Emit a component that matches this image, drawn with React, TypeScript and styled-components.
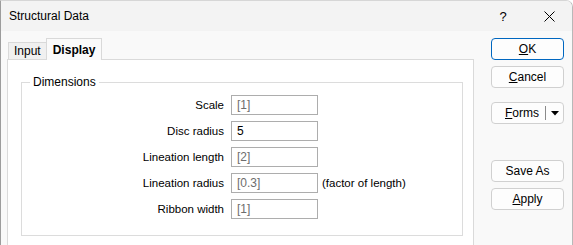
import styled, { createGlobalStyle } from "styled-components";

const GlobalStyle = createGlobalStyle`
  html, body {
    margin: 0;
    padding: 0;
    background: #ffffff;
  }
  body {
    font-family: "Segoe UI", "Liberation Sans", Arial, sans-serif;
    font-size: 12px;
    color: #000;
  }
`;

const Window = styled.div`
  width: 573px;
  height: 245px;
  box-sizing: border-box;
  border-left: 1px solid #9c9c9c;
  border-right: 1px solid #b8b8b8;
  border-top: 1px solid #d6d6d6;
  border-top-right-radius: 7px;
  background: #f9f9f9;
  display: flex;
  flex-direction: column;
  overflow: hidden;
`;

const TitleBar = styled.div`
  height: 30px;
  background: #f3f3f3;
  display: flex;
  align-items: center;
  padding-left: 8px;
  flex-shrink: 0;
`;

const Title = styled.span`
  flex: 1;
  font-size: 12px;
`;

const TitleButton = styled.div`
  width: 46px;
  height: 30px;
  display: flex;
  align-items: center;
  justify-content: center;
  font-size: 13px;
`;

const Body = styled.div`
  flex: 1;
  display: flex;
  padding: 7px 7px 0 6px;
  gap: 17px;
`;

const TabArea = styled.div`
  width: 467px;
  display: flex;
  flex-direction: column;
`;

const TabStrip = styled.div`
  height: 21px;
  display: flex;
  align-items: flex-end;
  padding-left: 1px;
`;

const Tab = styled.div<{ $active?: boolean }>`
  box-sizing: border-box;
  height: ${(p) => (p.$active ? "22px" : "17px")};
  padding: 0 ${(p) => (p.$active ? "6px" : "5px")};
  border: 1px solid #d9d9d9;
  border-bottom: none;
  background: ${(p) => (p.$active ? "#fafafa" : "#f0f0f0")};
  font-weight: ${(p) => (p.$active ? "bold" : "normal")};
  display: flex;
  align-items: center;
  margin-bottom: ${(p) => (p.$active ? "-1px" : "0")};
  margin-left: ${(p) => (p.$active ? "-1px" : "0")};
  position: relative;
  color: #000;
`;

const Panel = styled.div`
  flex: 1;
  background: #ffffff;
  border: 1px solid #dadada;
  border-bottom: none;
  padding: 15px 10px 0 13px;
`;

const GroupBox = styled.fieldset`
  margin: 0;
  border: 1px solid #dcdcdc;
  padding: 6px 0 16px 0;
  display: flex;
  flex-direction: column;
  gap: 6px;
`;

const Legend = styled.legend`
  padding: 0 3px;
  margin-left: 8px;
  font-size: 12px;
`;

const Row = styled.div`
  display: flex;
  align-items: center;
  height: 20px;
  font-size: 11.5px;
`;

const Label = styled.label`
  width: 202px;
  text-align: right;
  padding-right: 7px;
`;

const Field = styled.div<{ $muted?: boolean }>`
  box-sizing: border-box;
  width: 87px;
  height: 20px;
  border: 1px solid #adadad;
  padding-left: 5px;
  display: flex;
  align-items: center;
  font-size: 12px;
  color: ${(p) => (p.$muted ? "#6d6d6d" : "#000")};
  background: #fff;
`;

const Note = styled.span`
  margin-left: 4px;
`;

const ButtonColumn = styled.div`
  width: 73px;
  display: flex;
  flex-direction: column;
`;

const Button = styled.div<{ $primary?: boolean; $gap?: number }>`
  box-sizing: border-box;
  height: 22px;
  margin-top: ${(p) => p.$gap ?? 0}px;
  border: 1px solid ${(p) => (p.$primary ? "#0067c0" : "#d0d0d0")};
  border-radius: 4px;
  background: #fdfdfd;
  display: flex;
  align-items: center;
  justify-content: center;
`;

const SplitButton = styled(Button)`
  justify-content: flex-end;
  padding-right: 4px;
`;

const Divider = styled.span`
  width: 1px;
  height: 14px;
  background: #8a8a8a;
  margin: 0 5px 0 6px;
`;

const U = styled.span`
  text-decoration: underline;
`;

const rows = [
  { label: "Scale", value: "[1]", muted: true },
  { label: "Disc radius", value: "5", muted: false },
  { label: "Lineation length", value: "[2]", muted: true },
  { label: "Lineation radius", value: "[0.3]", muted: true, note: "(factor of length)" },
  { label: "Ribbon width", value: "[1]", muted: true },
];

const App = () => {
  return (
    <>
      <GlobalStyle />
      <Window>
        <TitleBar>
          <Title>Structural Data</Title>
          <TitleButton>?</TitleButton>
          <TitleButton>
            <svg width="11" height="11" viewBox="0 0 11 11">
              <path d="M0.5 0.5 L10.5 10.5 M10.5 0.5 L0.5 10.5" stroke="#000" strokeWidth="1" fill="none" />
            </svg>
          </TitleButton>
        </TitleBar>
        <Body>
          <TabArea>
            <TabStrip>
              <Tab>Input</Tab>
              <Tab $active>Display</Tab>
            </TabStrip>
            <Panel>
              <GroupBox>
                <Legend>Dimensions</Legend>
                {rows.map((r) => (
                  <Row key={r.label}>
                    <Label>{r.label}</Label>
                    <Field $muted={r.muted}>{r.value}</Field>
                    {r.note && <Note>{r.note}</Note>}
                  </Row>
                ))}
              </GroupBox>
            </Panel>
          </TabArea>
          <ButtonColumn>
            <Button $primary>
              <U>O</U>K
            </Button>
            <Button $gap={6}>
              <U>C</U>ancel
            </Button>
            <SplitButton $gap={14}>
              <span>
                <U>F</U>orms
              </span>
              <Divider />
              <svg width="8" height="5" viewBox="0 0 8 5">
                <path d="M0 0 H8 L4 4.5 Z" fill="#000" />
              </svg>
            </SplitButton>
            <Button $gap={36}>Save As</Button>
            <Button $gap={6}>
              <U>A</U>pply
            </Button>
          </ButtonColumn>
        </Body>
      </Window>
    </>
  );
};

export default App;
